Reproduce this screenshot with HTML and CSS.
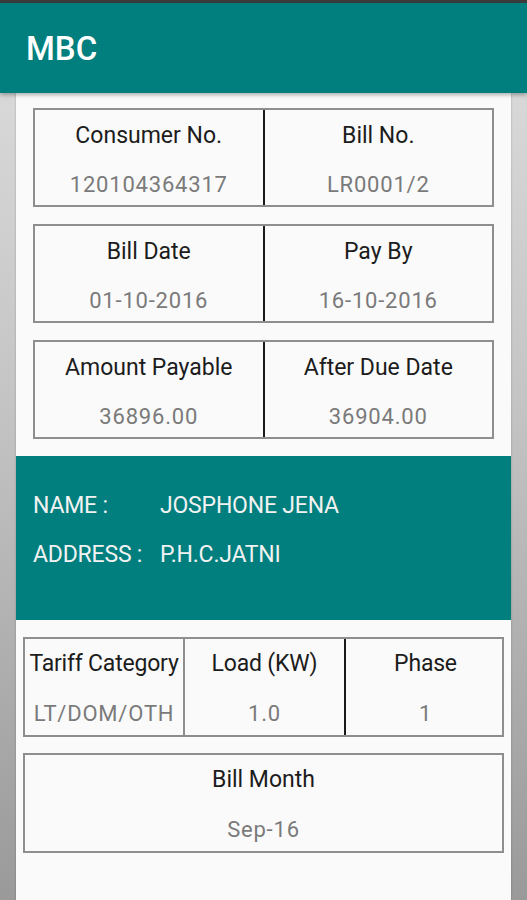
FILE: index.html
```html
<!DOCTYPE html>
<html>
<head>
<meta charset="utf-8">
<link rel="stylesheet" href="styles.css">
</head>
<body>
<div class="status"></div>
<header class="appbar"><span class="title">MBC</span></header>
<main class="card">
  <section class="pairs">
    <div class="row2">
      <div class="cell"><div class="lbl">Consumer No.</div><div class="val">120104364317</div></div>
      <div class="cell dark"><div class="lbl">Bill No.</div><div class="val">LR0001/2</div></div>
    </div>
    <div class="row2">
      <div class="cell"><div class="lbl">Bill Date</div><div class="val">01-10-2016</div></div>
      <div class="cell dark"><div class="lbl">Pay By</div><div class="val">16-10-2016</div></div>
    </div>
    <div class="row2">
      <div class="cell"><div class="lbl">Amount Payable</div><div class="val">36896.00</div></div>
      <div class="cell dark"><div class="lbl">After Due Date</div><div class="val">36904.00</div></div>
    </div>
  </section>
  <section class="info">
    <div class="line"><span class="key">NAME :</span><span>JOSPHONE JENA</span></div>
    <div class="line"><span class="key">ADDRESS :</span><span>P.H.C.JATNI</span></div>
  </section>
  <section class="more">
    <div class="row3">
      <div class="cell"><div class="lbl">Tariff Category</div><div class="val">LT/DOM/OTH</div></div>
      <div class="cell grey"><div class="lbl">Load (KW)</div><div class="val">1.0</div></div>
      <div class="cell dark"><div class="lbl">Phase</div><div class="val">1</div></div>
    </div>
    <div class="row1">
      <div class="cell"><div class="lbl">Bill Month</div><div class="val">Sep-16</div></div>
    </div>
  </section>
</main>
</body>
</html>
```
FILE: styles.css
```css
html, body {
  margin: 0;
  padding: 0;
}
body {
  width: 527px;
  height: 900px;
  overflow: hidden;
  font-family: Roboto, "Noto Sans", sans-serif;
  background: linear-gradient(180deg, #dedede 0%, #c4c4c4 45%, #9a9a9a 100%);
  display: flex;
  flex-direction: column;
}
.status {
  height: 3px;
  background: #3c3c3c;
  flex: none;
}
.appbar {
  height: 90px;
  background: #007f7e;
  display: flex;
  align-items: center;
  padding-left: 26px;
  box-shadow: 0 2px 4px rgba(0,0,0,0.3);
  position: relative;
  z-index: 1;
  flex: none;
}
.title {
  color: #ffffff;
  font-size: 33px;
  font-weight: 500;
  margin-top: 0;
}
.card {
  margin: 0 16px;
  flex: 1;
  background: #fafafa;
  padding-top: 15px;
  box-shadow: 0 0 2px rgba(0,0,0,0.25);
}
.pairs {
  padding: 0 17px;
  display: flex;
  flex-direction: column;
  gap: 17px;
}
.row2, .row3, .row1 {
  display: flex;
  height: 99px;
  box-sizing: border-box;
  border: 2px solid #8e8e8e;
}
.row3, .row1 {
  height: 100px;
}
.cell {
  flex: 1;
  display: flex;
  flex-direction: column;
  align-items: center;
  padding-top: 13px;
  gap: 23px;
  white-space: nowrap;
}
.cell.dark {
  border-left: 2px solid #1a1a1a;
}
.cell.grey {
  border-left: 2px solid #8e8e8e;
}
.lbl {
  font-size: 23px;
  line-height: 26px;
  color: #1c1c1c;
}
.val {
  font-size: 22px;
  line-height: 26px;
  color: #7a7a7a;
  letter-spacing: 0.8px;
}
.info {
  margin-top: 17px;
  height: 164px;
  box-sizing: border-box;
  background: #007f7e;
  padding: 37px 0 0 17px;
  display: flex;
  flex-direction: column;
  gap: 23px;
  color: #f2f2f2;
  font-size: 23px;
  line-height: 26px;
  letter-spacing: -0.2px;
}
.line {
  display: flex;
}
.key {
  width: 127px;
  flex: none;
}
.more {
  padding: 17px 7px 0;
  display: flex;
  flex-direction: column;
  gap: 16px;
}
.row3 .cell {
  flex: 0 0 auto;
  width: 159px;
}
.row3 .cell:first-child {
  width: 158px;
}
.row3 .lbl {
  letter-spacing: -0.2px;
}
.row3 .cell, .row1 .cell {
  padding-top: 12px;
  gap: 24px;
}
```
